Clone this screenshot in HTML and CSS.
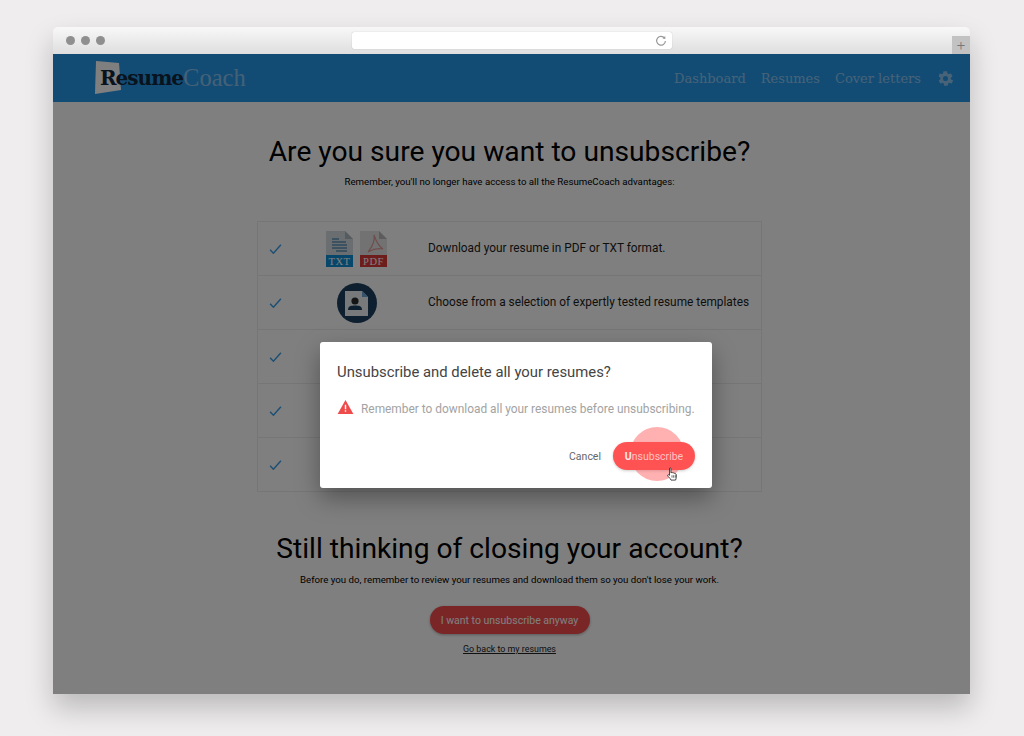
FILE: index.html
```html
<!DOCTYPE html>
<html lang="en">
<head>
  <meta charset="UTF-8" />
  <title>Unsubscribe - ResumeCoach</title>
  <link rel="stylesheet" href="styles.css">
</head>
<body>

<div class="window">
  <div class="chrome">
    <div class="dots"><span></span><span></span><span></span></div>
    <div class="address">
      <svg class="reload" width="12" height="12" viewBox="0 0 12 12"><path d="M9.6 3.2A4.4 4.4 0 1 0 10.4 6" fill="none" stroke="#999" stroke-width="1.2"/><path d="M7.6 3.6 10.4 4 10.2 1z" fill="#999"/></svg>
    </div>
    <div class="new-tab">+</div>
  </div>

  <div class="page">
    <header>
      <a class="logo">
        <svg class="logo-paper" width="26" height="33" viewBox="0 0 26 33"><path d="M1 0 24 2 26 29 0 33z" fill="#fff"/></svg>
        <span class="logo-bold">Resume</span><span class="logo-light">Coach</span>
      </a>
      <nav>
        <a>Dashboard</a>
        <a>Resumes</a>
        <a>Cover letters</a>
        <svg class="gear" width="17" height="17" viewBox="0 0 24 24"><path fill="currentColor" d="M19.4 13c.1-.3.1-.7.1-1s0-.7-.1-1l2.2-1.700c.2-.2.2-.4.1-.6l-2.100-3.600c-.1-.2-.4-.3-.6-.2l-2.600 1c-.5-.4-1.100-.8-1.800-1l-.4-2.700c0-.3-.2-.4-.5-.4h-4.200c-.3 0-.5.1-.5.4l-.4 2.700c-.6.2-1.200.6-1.800 1l-2.600-1c-.2-.1-.5 0-.6.2L2.500 8.700c-.1.2-.1.4.1.6L4.800 11c-.1.3-.1.7-.1 1s0 .7.1 1l-2.200 1.700c-.2.2-.2.4-.1.6l2.100 3.600c.1.2.4.3.6.2l2.600-1c.5.4 1.100.8 1.800 1l.4 2.700c0 .3.2.4.5.4h4.200c.3 0 .5-.1.5-.4l.4-2.700c.6-.2 1.200-.6 1.800-1l2.600 1c.2.1.5 0 .6-.2l2.100-3.600c.1-.2.1-.4-.1-.6zM12 15.600a3.600 3.600 0 1 1 0-7.200 3.600 3.600 0 0 1 0 7.200z"/></svg>
      </nav>
    </header>

    <main>
      <h1>Are you sure you want to unsubscribe?</h1>
      <p class="sub">Remember, you'll no longer have access to all the ResumeCoach advantages:</p>

      <div class="features">
        <div class="feature">
          <svg class="check" width="13" height="10" viewBox="0 0 15 12"><path d="M1 7 5 11 14 1" fill="none" stroke="#3a9fe6" stroke-width="1.8"/></svg>
          <div class="feature-icon">
            <svg width="61" height="36" viewBox="0 0 61 36">
              <path d="M0 0H19L27 8V25H0z" fill="#d5dde2"/>
              <path d="M19 0 27 8H19z" fill="#aab6bd"/>
              <path d="M6 8H13M6 11H20M6 14H21M6 17H21M10 20H21" stroke="#5b93b8" stroke-width="1.300"/>
              <rect y="24" width="27" height="12" fill="#0f8fd6"/>
              <text x="13.500" y="33.700" text-anchor="middle" class="doc-label">TXT</text>
              <path d="M34 0H53L61 8V25H34z" fill="#e4e4e4"/>
              <path d="M53 0 61 8H53z" fill="#b9b9b9"/>
              <path d="M42 21C46 16 49 9 48 4 50 10 52 15 57 18 52 17 47 18 42 21z" fill="none" stroke="#e39a9a" stroke-width="1.200"/>
              <rect x="34" y="24" width="27" height="12" fill="#dd3a3a"/>
              <text x="47.500" y="33.700" text-anchor="middle" class="doc-label">PDF</text>
            </svg>
          </div>
          <p>Download your resume in PDF or TXT format.</p>
        </div>
        <div class="feature">
          <svg class="check" width="13" height="10" viewBox="0 0 15 12"><path d="M1 7 5 11 14 1" fill="none" stroke="#3a9fe6" stroke-width="1.8"/></svg>
          <div class="feature-icon">
            <svg width="40" height="40" viewBox="0 0 40 40">
              <circle cx="20" cy="20" r="20" fill="#1d3f5e"/>
              <path d="M8 8H25L31 14V33H8z" fill="#eef2f5"/>
              <path d="M25 8 31 14H25z" fill="#6fa7d8"/>
              <circle cx="18" cy="18" r="3.600" fill="#2b2b2b"/>
              <path d="M11 27C11 23 14 22.500 18 22.500S25 23 25 27z" fill="#1d3f5e"/>
            </svg>
          </div>
          <p>Choose from a selection of expertly tested resume templates</p>
        </div>
        <div class="feature">
          <svg class="check" width="13" height="10" viewBox="0 0 15 12"><path d="M1 7 5 11 14 1" fill="none" stroke="#3a9fe6" stroke-width="1.8"/></svg>
        </div>
        <div class="feature">
          <svg class="check" width="13" height="10" viewBox="0 0 15 12"><path d="M1 7 5 11 14 1" fill="none" stroke="#3a9fe6" stroke-width="1.8"/></svg>
        </div>
        <div class="feature">
          <svg class="check" width="13" height="10" viewBox="0 0 15 12"><path d="M1 7 5 11 14 1" fill="none" stroke="#3a9fe6" stroke-width="1.8"/></svg>
        </div>
      </div>

      <h2>Still thinking of closing your account?</h2>
      <p class="sub sub-tight">Before you do, remember to review your resumes and download them so you don't lose your work.</p>
      <button class="btn-anyway">I want to unsubscribe anyway</button>
      <a class="back-link">Go back to my resumes</a>
    </main>

    <div class="overlay"></div>

    <div class="dialog">
      <h3>Unsubscribe and delete all your resumes?</h3>
      <div class="warning">
        <svg width="17" height="14" viewBox="0 0 18 16"><path d="M9 0 18 16H0z" fill="#f04b4b"/><path d="M8.200 5.500h1.600v5H8.200zM8.200 11.800h1.600v1.600H8.200z" fill="#fff"/></svg>
        <span>Remember to download all your resumes before unsubscribing.</span>
      </div>
      <div class="actions">
        <button class="btn-cancel">Cancel</button>
        <button class="btn-unsub"><span class="ripple"></span><span class="btn-text"><b>U</b>nsubscribe</span></button>
      </div>
      <svg class="hand" width="12" height="14" viewBox="0 0 13 17"><path d="M3.500 1.500c.8-.8 1.700-.3 1.700.6V7l1-.3c.6-.2 1 .1 1.200.5.6-.3 1.200-.2 1.500.4.700-.3 1.300 0 1.600.6.700-.1 1.200.4 1.200 1.200v3.400c0 1.300-.7 2-.9 3.100H5.300c-.4-1.300-1.500-2.300-2.700-3.700C1.500 11.300 1 10.300 1.300 9.700c.4-.7 1.300-.5 2.200.4z" fill="#fff" stroke="#222" stroke-width="1"/><path d="M6.500 10v3M8.500 10v3M10.500 10v3" stroke="#222" stroke-width=".8"/></svg>
    </div>
  </div>
</div>

</body>
</html>
```

FILE: styles.css
```css
html, body {
  height: 100%;
}

body {
  margin: 0;
  background: #efedee;
  font-family: Roboto, "Liberation Sans", sans-serif;
  color: #000;
  overflow: hidden;
}

.window {
  width: 917px;
  height: 667px;
  margin: 27px 0 0 53px;
  display: flex;
  flex-direction: column;
  box-shadow: 0 14px 28px rgba(0,0,0,0.22);
  border-radius: 5px 5px 0 0;
}

.chrome {
  height: 27px;
  flex: none;
  display: flex;
  align-items: center;
  position: relative;
  background: linear-gradient(#f8f8f8, #dedede);
  border-radius: 5px 5px 0 0;
}

.dots {
  display: flex;
  gap: 6px;
  padding-left: 13px;
}

.dots span {
  width: 9px;
  height: 9px;
  border-radius: 50%;
  background: #8f8f8f;
}

.address {
  width: 320px;
  height: 17px;
  margin-left: 247px;
  background: #fff;
  border-radius: 2px;
  box-shadow: 0 0 1px rgba(0,0,0,0.3);
  display: flex;
  align-items: center;
  justify-content: flex-end;
  padding-right: 5px;
  box-sizing: border-box;
}

.new-tab {
  position: absolute;
  right: 0;
  bottom: 0;
  width: 18px;
  height: 18px;
  background: #c2c2c2;
  color: #777;
  font-size: 15px;
  font-weight: 300;
  line-height: 18px;
  text-align: center;
}

.page {
  flex: 1;
  position: relative;
  background: #fff;
  overflow: hidden;
}

header {
  height: 48px;
  background: #2599ea;
  display: flex;
  align-items: center;
  justify-content: space-between;
  padding: 0 16px 0 42px;
}

.logo {
  display: flex;
  align-items: center;
  position: relative;
  font-family: "DejaVu Serif", serif;
  font-size: 20px;
  letter-spacing: -1px;
}

.logo-paper {
  position: absolute;
  left: 0;
  top: -3px;
}

.logo-bold {
  position: relative;
  font-weight: bold;
  color: #10263a;
  padding-left: 5px;
}

.logo-light {
  font-family: "Liberation Serif", serif;
  font-size: 24.500px;
  letter-spacing: 0;
  color: #8ac2ee;
}

nav {
  display: flex;
  align-items: center;
  gap: 15px;
  color: #90c6f0;
  font-family: "DejaVu Serif", serif;
  font-size: 13px;
}

.gear {
  margin-left: 1px;
}

main {
  padding: 33px 4px 0 0;
  display: flex;
  flex-direction: column;
  align-items: center;
}

h1 {
  margin: 0;
  font-size: 28.200px;
  font-weight: 400;
  line-height: 34px;
}

.sub {
  margin: 6px 0 0;
  font-size: 9.700px;
  line-height: 14px;
}

.features {
  width: 505px;
  margin-top: 32px;
  border: 1px solid #ececec;
  box-sizing: border-box;
}

.feature {
  height: 54px;
  display: flex;
  align-items: center;
  border-bottom: 1px solid #ececec;
  box-sizing: border-box;
  padding-left: 11px;
}

.feature:last-child {
  border-bottom: none;
  height: 53px;
}

.feature p {
  margin: 0 0 2px;
  font-size: 11.850px;
  white-space: nowrap;
  color: #1c1c1c;
}

.feature-icon {
  width: 127px;
  margin-left: 11px;
  margin-right: 8px;
  flex: none;
  display: flex;
  justify-content: center;
}

.doc-label {
  font-family: "Liberation Serif", serif;
  font-size: 10.500px;
  letter-spacing: 0.5px;
  fill: #fff;
}

h2 {
  margin: 41px 0 0;
  font-size: 28.200px;
  font-weight: 400;
  line-height: 32px;
}

.sub-tight {
  margin-top: 8px;
}

.btn-anyway {
  margin-top: 19px;
  width: 160px;
  height: 28px;
  border: none;
  border-radius: 14px;
  background: #f54c4c;
  color: #fff;
  font-family: inherit;
  font-size: 10.500px;
  box-shadow: 0 1px 3px rgba(0,0,0,0.3);
}

.back-link {
  margin-top: 10px;
  font-size: 8.900px;
  text-decoration: underline;
  color: #222;
}

.overlay {
  position: absolute;
  inset: 0;
  background: rgba(0,0,0,0.5);
}

.dialog {
  position: absolute;
  left: 267px;
  top: 288px;
  width: 392px;
  height: 146px;
  background: #fff;
  border-radius: 3px;
  box-shadow: 0 10px 24px rgba(0,0,0,0.35);
  padding: 21px 17px 0;
  box-sizing: border-box;
}

h3 {
  margin: 0;
  font-size: 14.850px;
  font-weight: 400;
  line-height: 18px;
  color: #444;
}

.warning {
  display: flex;
  align-items: center;
  gap: 7px;
  margin-top: 19px;
  font-size: 11.900px;
  line-height: 14px;
  white-space: nowrap;
  color: #a3a3a3;
}

.warning svg {
  flex: none;
  margin-bottom: 4px;
}

.actions {
  display: flex;
  justify-content: flex-end;
  align-items: center;
  gap: 12px;
  margin-top: 24px;
}

.btn-cancel {
  border: none;
  background: none;
  padding: 0;
  font-family: inherit;
  font-size: 10.500px;
  color: #666;
}

.btn-unsub {
  position: relative;
  width: 82px;
  height: 28px;
  border: none;
  border-radius: 14px;
  background: #ff5252;
  font-family: inherit;
  font-size: 10.500px;
  color: #ffc2c2;
  padding: 0;
  box-shadow: 0 1px 3px rgba(0,0,0,0.2);
}

.btn-unsub b {
  color: #ffe6e6;
}

.btn-text {
  position: relative;
}

.ripple {
  position: absolute;
  left: 17px;
  top: -15px;
  width: 54px;
  height: 54px;
  border-radius: 50%;
  background: rgba(255,82,82,0.45);
}

.hand {
  position: absolute;
  left: 346px;
  top: 125px;
}
```
